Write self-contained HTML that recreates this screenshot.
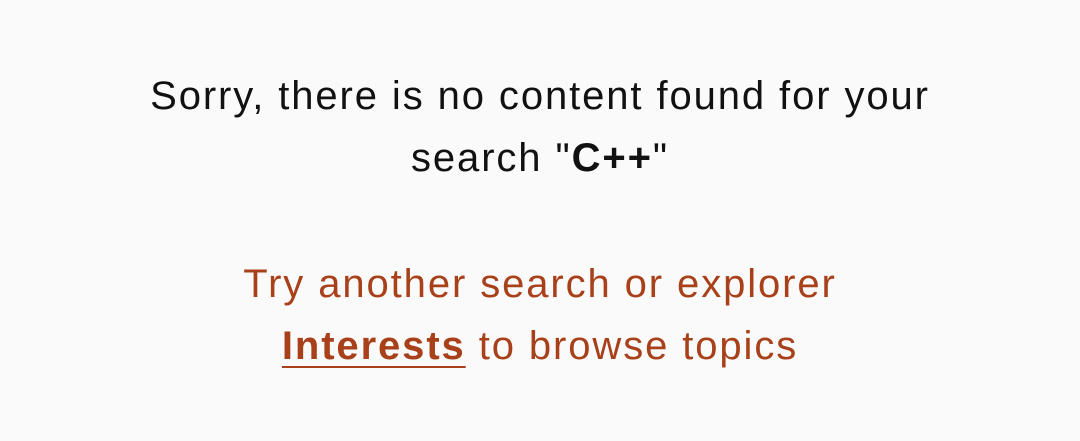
<!DOCTYPE html>
<html><head><style>
html,body{margin:0;padding:0;width:1080px;height:441px;background:#fafafa;overflow:hidden}
body{font-family:"Liberation Sans",sans-serif;text-align:center}
.a{position:absolute;left:0;width:1080px;font-size:40px;line-height:62px;letter-spacing:1.9px}
.t1{top:65px;color:#111}
.t2{top:253px;color:#a8401a}
a{color:#a8401a;font-weight:bold;text-decoration:underline;text-underline-offset:7px;text-decoration-thickness:2px}
</style></head><body>
<div class="a t1">Sorry, there is no content found for your<br>search "<b>C++</b>"</div>
<div class="a t2">Try another search or explorer<br><a>Interests</a> to browse topics</div>
</body></html>
